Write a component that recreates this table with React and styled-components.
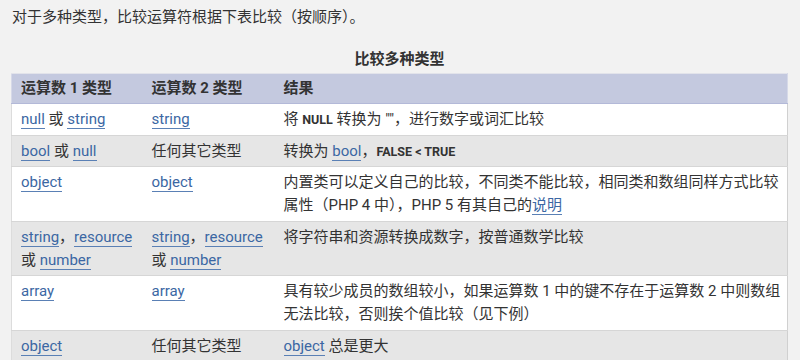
import React from 'react';
import styled, { createGlobalStyle } from 'styled-components';

const GlobalStyle = createGlobalStyle`
  body {
    margin: 0;
    background-color: #f2f2f2;
    color: #333;
    font-family: Roboto, "Noto Sans CJK SC", sans-serif;
    font-size: 15px;
  }
`;

const Page = styled.div`
  padding: 6px 13px 0 11px;
`;

const Intro = styled.p`
  margin: 0 0 20px 1px;
  line-height: 22px;
`;

const Table = styled.table`
  width: 777px;
  border-collapse: collapse;
  table-layout: fixed;
`;

const Caption = styled.caption`
  font-weight: bold;
  line-height: 22px;
  padding-bottom: 3px;
`;

const HeadCell = styled.th`
  text-align: left;
  font-weight: bold;
  line-height: 23px;
  padding: 3px 6px 3px 9px;
  background-color: #c4c9df;
  border-top: 1px solid #e2e3ea;
  border-bottom: 1px solid #b3b9d8;
  &:first-child { border-left: 1px solid #d6d9e8; }
  &:last-child { border-right: 1px solid #d6d9e8; }
`;

const Row = styled.tr`
  background-color: ${p => (p.$alt ? '#e6e6e6' : '#fff')};
`;

const Cell = styled.td`
  vertical-align: top;
  line-height: 23px;
  padding: 4px 5px 3.5px 9px;
  border-bottom: 1px solid #d6d6d6;
  &:first-child { border-left: 1px solid #dcdcdc; }
  &:last-child { border-right: 1px solid #d0d0d0; }
`;

const Link = styled.a`
  color: #3b67a3;
  text-decoration: none;
  border-bottom: 1px solid #5a80b5;
`;

const Const = styled.b`
  font-size: 12.5px;
  font-weight: bold;
`;

const App = () => {
  return (
    <Page>
      <GlobalStyle />
      <Intro>对于多种类型，比较运算符根据下表比较（按顺序）。</Intro>
      <Table>
        <Caption>比较多种类型</Caption>
        <colgroup>
          <col style={{ width: 131 }} />
          <col style={{ width: 132 }} />
          <col />
        </colgroup>
        <thead>
          <tr>
            <HeadCell>运算数 1 类型</HeadCell>
            <HeadCell>运算数 2 类型</HeadCell>
            <HeadCell>结果</HeadCell>
          </tr>
        </thead>
        <tbody>
          <Row>
            <Cell><Link>null</Link> 或 <Link>string</Link></Cell>
            <Cell><Link>string</Link></Cell>
            <Cell>将 <Const>NULL</Const> 转换为 ""，进行数字或词汇比较</Cell>
          </Row>
          <Row $alt>
            <Cell><Link>bool</Link> 或 <Link>null</Link></Cell>
            <Cell>任何其它类型</Cell>
            <Cell>转换为 <Link>bool</Link>，<Const>FALSE &lt; TRUE</Const></Cell>
          </Row>
          <Row>
            <Cell><Link>object</Link></Cell>
            <Cell><Link>object</Link></Cell>
            <Cell>内置类可以定义自己的比较，不同类不能比较，相同类和数组同样方式比较属性（PHP 4 中），PHP 5 有其自己的<Link>说明</Link></Cell>
          </Row>
          <Row $alt>
            <Cell><Link>string</Link>，<Link>resource</Link> 或 <Link>number</Link></Cell>
            <Cell><Link>string</Link>，<Link>resource</Link> 或 <Link>number</Link></Cell>
            <Cell>将字符串和资源转换成数字，按普通数学比较</Cell>
          </Row>
          <Row>
            <Cell><Link>array</Link></Cell>
            <Cell><Link>array</Link></Cell>
            <Cell>具有较少成员的数组较小，如果运算数 1 中的键不存在于运算数 2 中则数组无法比较，否则挨个值比较（见下例）</Cell>
          </Row>
          <Row $alt>
            <Cell><Link>object</Link></Cell>
            <Cell>任何其它类型</Cell>
            <Cell><Link>object</Link> 总是更大</Cell>
          </Row>
        </tbody>
      </Table>
    </Page>
  );
};

export default App;
